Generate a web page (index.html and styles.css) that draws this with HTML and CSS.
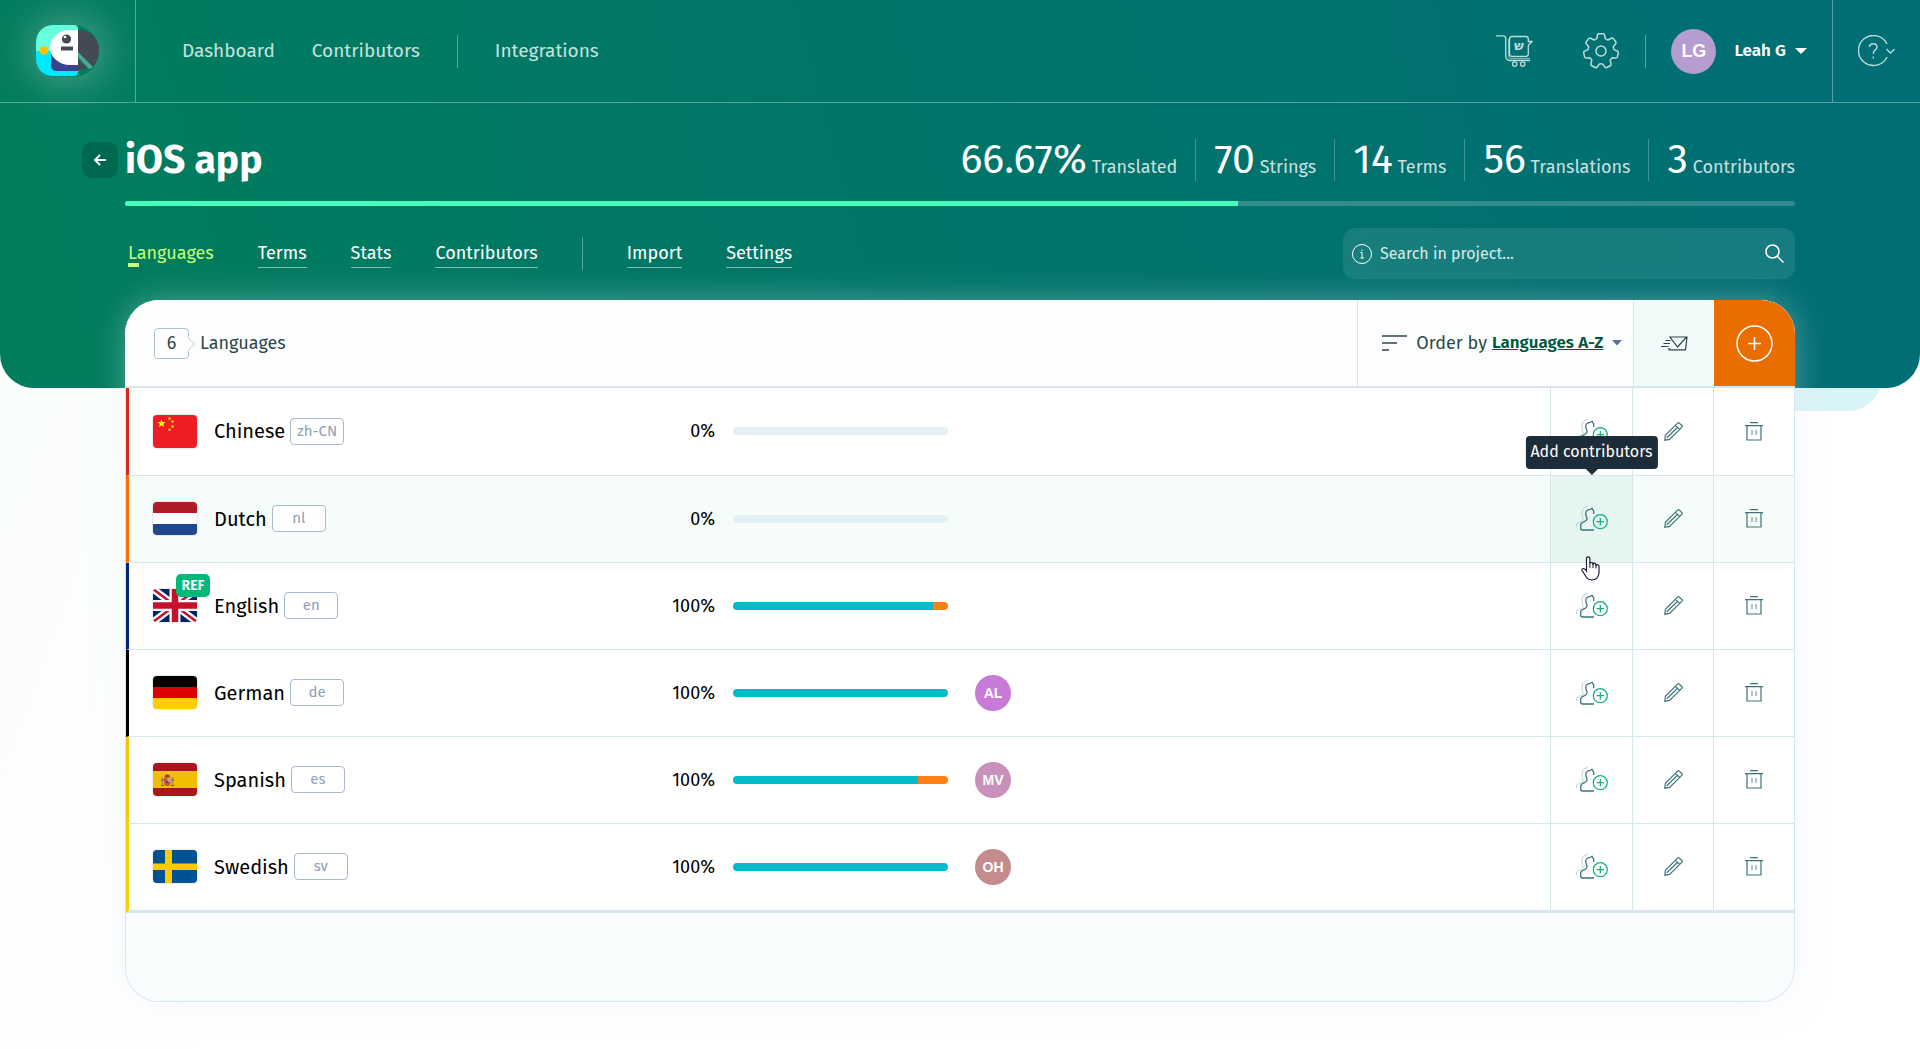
FILE: index.html
```html
<!DOCTYPE html>
<html lang="en">
<head>
  <meta charset="UTF-8">
  <meta name="viewport" content="width=device-width, initial-scale=1.0">
  <title>iOS app - Languages</title>
  <link rel="stylesheet" href="styles.css">
</head>
<body>
  <!-- shared icons -->
  <svg class="sprite" aria-hidden="true">
    <symbol id="icon-add-user" viewBox="0 0 32 25">
      <path d="M.5 21v-2c0-3 6-2.500 6.500-5 .3-2-1.500-4.500-1-8C6.500 2.500 8.500.8 12 .6" fill="none" stroke="#b9d0d0"/>
      <path d="M17.700 8V5l-1.700-2.600c-1.200 1.400-3.200.9-4.600 1.800C8.600 6 9.800 9.500 11 12c1 4-5.500 3.500-6.300 6.500V22c0 1.300.6 2 1.800 2H18" fill="none" stroke="#3c7478" stroke-width="1.300"/>
      <circle cx="24.300" cy="15.700" r="7" fill="none" stroke="#0fb07a" stroke-width="1.200"/>
      <path d="M24.300 12v7.400M20.600 15.700H28" stroke="#0fb07a" stroke-width="1.200"/>
    </symbol>
    <symbol id="icon-pencil" viewBox="0 0 19 19">
      <path d="M.8 18.200l.6-5L13.800.9q.7-.5 1.300 0l2.900 2.800q.6.700 0 1.400L5.600 17.400zM11.500 3.300l4.100 4.100M13.300 5.500L2.800 15.800" fill="none" stroke="#3c7478" stroke-width="1.200"/>
    </symbol>
    <symbol id="icon-trash" viewBox="0 0 18 19">
      <path d="M5 .7h8M0 3.700h18M2 4v14h14V4" fill="none" stroke="#3c7478" stroke-width="1.200"/>
      <path d="M7 8v5M11 8v5" stroke="#7fa5a7" stroke-width="1.300"/>
    </symbol>
  </svg>

  <header class="hero">
    <div class="topbar">
      <a class="logo" href="#" aria-label="Home">
        <svg width="63" height="52" viewBox="0 0 63 52" aria-hidden="true">
          <path d="M0 26V18C0 7 7 0 18 0H38Q42 0 42 4V26z" fill="#66ffdb"/>
          <path d="M0 26V33C0 44 7 51 18 51H38Q42 51 42 47V26z" fill="#00eaff"/>
          <path d="M15 26H42V46H21Q15 46 15 40z" fill="#3b4390"/>
          <path d="M42 5H34A20 17.500 0 0 0 34 40H42z" fill="#fff"/>
          <path d="M42 5C54 5 63 14 63 25C63 32 60 38 57 42L42 27z" fill="#434955"/>
          <path d="M42 34L51 43Q47 45 42 45z" fill="#434955"/>
          <path d="M42 27L57 42L53 44L42 32z" fill="#6db9a5" opacity=".7"/>
          <circle cx="30.500" cy="14" r="4.600" fill="#434955"/>
          <circle cx="29" cy="12" r="1.300" fill="#fff"/>
          <path d="M25 21.500H37V25.500H25z" fill="#434955"/>
          <circle cx="8" cy="25.500" r="4.300" fill="#ffc400"/>
        </svg>
      </a>
      <nav class="main-nav">
        <a href="#">Dashboard</a>
        <a href="#">Contributors</a>
        <span class="divider"></span>
        <a href="#">Integrations</a>
      </nav>
      <div class="tools">
        <button class="icon-btn" aria-label="Order translations">
          <svg width="37" height="33" viewBox="0 0 37 33" fill="none" stroke="currentColor" stroke-width="1.300" aria-hidden="true">
            <path d="M0 .8H7Q9.700.8 9.700 3.500V20Q9.700 25.500 14 25.500H34"/>
            <path d="M32.300 10.500V19Q32.300 21.300 30 21.300H16Q13.500 21.300 13.500 19V4Q13.500 1.500 16 1.500H30Q32.300 1.500 32.300 4V6.500H36L32.300 10.500"/>
            <path d="M12.500 4V20Q12.500 23.500 15.500 23.500H34" opacity=".6"/>
            <circle cx="18.700" cy="29" r="2.200"/>
            <circle cx="26.700" cy="29" r="2.200"/>
            <text class="cart-letter" x="23" y="15" text-anchor="middle">ש</text>
          </svg>
        </button>
        <button class="icon-btn" aria-label="Settings">
          <svg width="36" height="36" viewBox="-18 -18 36 36" aria-hidden="true">
            <g id="tooth">
              <path d="M-5.550-11.530L-4.200-12.500L-3.500-16Q-3.200-17.300-2-17.300H2Q3.200-17.300 3.500-16L4.200-12.500L5.550-11.530" fill="none" stroke="currentColor" stroke-width="1.500"/>
            </g>
            <use href="#tooth" transform="rotate(51.430)"/>
            <use href="#tooth" transform="rotate(102.860)"/>
            <use href="#tooth" transform="rotate(154.290)"/>
            <use href="#tooth" transform="rotate(205.710)"/>
            <use href="#tooth" transform="rotate(257.140)"/>
            <use href="#tooth" transform="rotate(308.570)"/>
            <circle r="5" fill="none" stroke="currentColor" stroke-width="1.500"/>
          </svg>
        </button>
        <span class="divider"></span>
        <button class="user">
          <span class="avatar avatar-large">LG</span>
          <span>Leah G</span>
          <svg width="12" height="6" viewBox="0 0 12 6" aria-hidden="true"><path d="M0 0H12L6 6z" fill="#fff"/></svg>
        </button>
      </div>
      <button class="help" aria-label="Help">
        <svg width="38" height="32" viewBox="0 0 38 32" fill="none" stroke="currentColor" stroke-width="1.400" aria-hidden="true">
          <path d="M29 9A15 15 0 1 0 29 22"/>
          <path d="M11.500 12Q11.500 8.800 15.300 8.800Q19 8.800 19 12Q19 14 17 15.200Q15.300 16.300 15.300 19M15.300 21.500V23.500"/>
          <path d="M28.500 14L32.500 18L36.500 14"/>
        </svg>
      </button>
    </div>

    <div class="wrap">
      <div class="project-head">
        <a class="back" href="#" aria-label="Back">
          <svg width="14" height="12" viewBox="0 0 14 12" fill="none" stroke="#fff" stroke-width="2" aria-hidden="true"><path d="M13 6H2M7 1L2 6L7 11"/></svg>
        </a>
        <h1>iOS app</h1>
        <ul class="stats">
          <li><strong>66.67%</strong> Translated</li>
          <li><strong>70</strong> Strings</li>
          <li><strong>14</strong> Terms</li>
          <li><strong>56</strong> Translations</li>
          <li><strong>3</strong> Contributors</li>
        </ul>
      </div>
      <div class="total"><div class="total-fill" style="width: 66.67%"></div></div>
      <div class="project-nav">
        <nav class="tabs">
          <a class="active" href="#">Languages</a>
          <a href="#">Terms</a>
          <a href="#">Stats</a>
          <a href="#">Contributors</a>
          <span class="divider"></span>
          <a href="#">Import</a>
          <a href="#">Settings</a>
        </nav>
        <form class="search">
          <svg width="20" height="20" viewBox="0 0 20 20" fill="none" stroke="#fff" aria-hidden="true">
            <circle cx="10" cy="10" r="9.500"/>
            <path d="M8.500 8.500H10V14M8.500 14H12M10 5.500V7"/>
          </svg>
          <input type="text" placeholder="Search in project..." aria-label="Search in project">
          <button aria-label="Search">
            <svg width="19" height="19" viewBox="0 0 19 19" fill="none" stroke="#fff" stroke-width="1.500" aria-hidden="true"><circle cx="7.500" cy="7.500" r="6.500"/><path d="M12 12L18.500 18.500"/></svg>
          </button>
        </form>
      </div>
    </div>
  </header>

  <main class="wrap">
    <section class="card">
      <div class="card-head">
        <h2><span class="count">6</span> Languages</h2>
        <div class="order">
          <svg width="25" height="16" viewBox="0 0 25 16" stroke="#2c474c" stroke-width="1.300" aria-hidden="true"><path d="M0 1H25M0 8H15M0 15H7"/></svg>
          <label for="order">Order by</label>
          <select id="order">
            <option>Languages A-Z</option>
            <option>Languages Z-A</option>
            <option>Progress</option>
          </select>
          <svg width="10" height="6" viewBox="0 0 10 6" aria-hidden="true"><path d="M0 0H10L5 5.500z" fill="#55769b"/></svg>
        </div>
        <button class="mail" aria-label="Notify contributors">
          <svg width="27" height="15" viewBox="0 0 27 15" fill="none" stroke="#2c474c" stroke-width="1.200" aria-hidden="true">
            <path d="M8 12V13.800H24.500L26 1H9L16.500 11L25.500 1"/>
            <path d="M4.500 4.500H9.500M2.500 7.500H9M0 10.500H7.500"/>
          </svg>
        </button>
        <button class="add" aria-label="Add language">
          <svg width="37" height="37" viewBox="0 0 37 37" fill="none" stroke="#fff" stroke-width="1.500" aria-hidden="true"><circle cx="18.500" cy="18.500" r="17.500"/><path d="M18.500 12V25M12 18.500H25"/></svg>
        </button>
      </div>

      <table class="languages">
        <tbody>
          <tr>
            <th class="name china" scope="row">
              <div class="lang">
                <svg class="flag" viewBox="0 0 44 33" aria-hidden="true">
                  <path d="M0 0H44V33H0z" fill="#ee1c25"/>
                  <path d="M8.500 4L9.500 7H12.700L10.200 9L11.100 12L8.500 10.200L5.900 12L6.800 9L4.300 7H7.500z" fill="#ff0"/>
                  <g fill="#ffe600"><circle cx="16.500" cy="3.500" r="1.200"/><circle cx="19.500" cy="6.500" r="1.200"/><circle cx="19.500" cy="11.500" r="1.200"/><circle cx="16.500" cy="14.800" r="1.200"/></g>
                </svg>
                <span>Chinese</span><span class="code">zh-CN</span>
              </div>
            </th>
            <td class="percent">0%</td>
            <td class="progress"><div class="bar"></div></td>
            <td class="people"></td>
            <td class="action assign"><button aria-label="Add contributors"><svg width="32" height="25"><use href="#icon-add-user"/></svg></button></td>
            <td class="action"><button aria-label="Edit"><svg width="19" height="19"><use href="#icon-pencil"/></svg></button></td>
            <td class="action"><button aria-label="Delete"><svg width="18" height="19"><use href="#icon-trash"/></svg></button></td>
          </tr>
          <tr class="hovered">
            <th class="name netherlands" scope="row">
              <div class="lang">
                <svg class="flag" viewBox="0 0 44 33" aria-hidden="true">
                  <path d="M0 0H44V33H0z" fill="#fff"/>
                  <path d="M0 0H44V11H0z" fill="#ae1c28"/>
                  <path d="M0 22H44V33H0z" fill="#21468b"/>
                </svg>
                <span>Dutch</span><span class="code">nl</span>
              </div>
            </th>
            <td class="percent">0%</td>
            <td class="progress"><div class="bar"></div></td>
            <td class="people"></td>
            <td class="action assign current">
              <button aria-label="Add contributors"><svg width="32" height="25"><use href="#icon-add-user"/></svg></button>
              <span class="tooltip" role="tooltip">Add contributors</span>
              <svg class="pointer" width="19" height="25" viewBox="0 0 19 25" aria-hidden="true">
                <path d="M5.500 14V2.500Q5.500.8 7.200.8T8.900 2.500V7Q11.500 5.800 12 7.500V9Q12.200 6.500 14.500 7.500L15 10Q15.500 8 17 8.800Q18 9.200 18 10.500V17Q17 24 11 24Q7 24 5 20.500L1 14.500Q.5 12.500 2.500 12.500Q4 12.700 5.500 15z" fill="#fff" stroke="#1c1c33" stroke-width="1.200"/>
                <path d="M8.900 6V12M12 7.500V12M15 9V12.500" fill="none" stroke="#1c1c33"/>
              </svg>
            </td>
            <td class="action"><button aria-label="Edit"><svg width="19" height="19"><use href="#icon-pencil"/></svg></button></td>
            <td class="action"><button aria-label="Delete"><svg width="18" height="19"><use href="#icon-trash"/></svg></button></td>
          </tr>
          <tr>
            <th class="name britain" scope="row">
              <div class="lang">
                <span class="flag-holder">
                  <svg class="flag" viewBox="0 0 44 33" aria-hidden="true">
                    <path d="M0 0H44V33H0z" fill="#012169"/>
                    <path d="M0 0L44 33M44 0L0 33" stroke="#fff" stroke-width="7"/>
                    <path d="M0 0L44 33M44 0L0 33" stroke="#c8102e" stroke-width="2.500"/>
                    <path d="M22 0V33M0 16.500H44" stroke="#fff" stroke-width="11"/>
                    <path d="M22 0V33M0 16.500H44" stroke="#c8102e" stroke-width="6.500"/>
                  </svg>
                  <span class="ref">REF</span>
                </span>
                <span>English</span><span class="code">en</span>
              </div>
            </th>
            <td class="percent">100%</td>
            <td class="progress"><div class="bar"><div class="done" style="width: 93%"></div><div class="fuzzy" style="width: 7%"></div></div></td>
            <td class="people"></td>
            <td class="action assign"><button aria-label="Add contributors"><svg width="32" height="25"><use href="#icon-add-user"/></svg></button></td>
            <td class="action"><button aria-label="Edit"><svg width="19" height="19"><use href="#icon-pencil"/></svg></button></td>
            <td class="action"><button aria-label="Delete"><svg width="18" height="19"><use href="#icon-trash"/></svg></button></td>
          </tr>
          <tr>
            <th class="name germany" scope="row">
              <div class="lang">
                <svg class="flag" viewBox="0 0 44 33" aria-hidden="true">
                  <path d="M0 0H44V11H0z"/>
                  <path d="M0 11H44V22H0z" fill="#d00"/>
                  <path d="M0 22H44V33H0z" fill="#ffce00"/>
                </svg>
                <span>German</span><span class="code">de</span>
              </div>
            </th>
            <td class="percent">100%</td>
            <td class="progress"><div class="bar"><div class="done" style="width: 100%"></div></div></td>
            <td class="people"><span class="avatar avatar-al">AL</span></td>
            <td class="action assign"><button aria-label="Add contributors"><svg width="32" height="25"><use href="#icon-add-user"/></svg></button></td>
            <td class="action"><button aria-label="Edit"><svg width="19" height="19"><use href="#icon-pencil"/></svg></button></td>
            <td class="action"><button aria-label="Delete"><svg width="18" height="19"><use href="#icon-trash"/></svg></button></td>
          </tr>
          <tr>
            <th class="name spain" scope="row">
              <div class="lang">
                <svg class="flag" viewBox="0 0 44 33" aria-hidden="true">
                  <path d="M0 0H44V33H0z" fill="#aa151b"/>
                  <path d="M0 8H44V25H0z" fill="#f1bf00"/>
                  <path d="M9 14V22M19.500 14V22" stroke="#a88a62" stroke-width="1.500"/>
                  <path d="M8 22.500H11M18 22.500H21M8 17H11M18 17H21" stroke="#7d5a38"/>
                  <path d="M11 15H17.500V20Q17.500 23 14.300 23Q11 23 11 20z" fill="#c0543f"/>
                  <path d="M14.300 15H17.500V19H14.300z" fill="#cfa3a8"/>
                  <path d="M11.500 14.500Q11.500 11.500 14.300 11.500T17 14.500z" fill="#9c3a24"/>
                  <circle cx="14.300" cy="19" r="1.200" fill="#5a3d72"/>
                </svg>
                <span>Spanish</span><span class="code">es</span>
              </div>
            </th>
            <td class="percent">100%</td>
            <td class="progress"><div class="bar"><div class="done" style="width: 86%"></div><div class="fuzzy" style="width: 14%"></div></div></td>
            <td class="people"><span class="avatar avatar-mv">MV</span></td>
            <td class="action assign"><button aria-label="Add contributors"><svg width="32" height="25"><use href="#icon-add-user"/></svg></button></td>
            <td class="action"><button aria-label="Edit"><svg width="19" height="19"><use href="#icon-pencil"/></svg></button></td>
            <td class="action"><button aria-label="Delete"><svg width="18" height="19"><use href="#icon-trash"/></svg></button></td>
          </tr>
          <tr>
            <th class="name sweden" scope="row">
              <div class="lang">
                <svg class="flag" viewBox="0 0 44 33" aria-hidden="true">
                  <path d="M0 0H44V33H0z" fill="#005293"/>
                  <path d="M12 0H19V33H12zM0 13.500H44V20H0z" fill="#fecb00"/>
                </svg>
                <span>Swedish</span><span class="code">sv</span>
              </div>
            </th>
            <td class="percent">100%</td>
            <td class="progress"><div class="bar"><div class="done" style="width: 100%"></div></div></td>
            <td class="people"><span class="avatar avatar-oh">OH</span></td>
            <td class="action assign"><button aria-label="Add contributors"><svg width="32" height="25"><use href="#icon-add-user"/></svg></button></td>
            <td class="action"><button aria-label="Edit"><svg width="19" height="19"><use href="#icon-pencil"/></svg></button></td>
            <td class="action"><button aria-label="Delete"><svg width="18" height="19"><use href="#icon-trash"/></svg></button></td>
          </tr>
        </tbody>
      </table>
      <div class="card-foot"></div>
    </section>
  </main>
</body>
</html>
```
FILE: styles.css
```css
* {
  box-sizing: border-box;
}
body {
  margin: 0;
  font-family: "Fira Sans", "Noto Sans", sans-serif;
  font-size: 18px;
  line-height: 24px;
  color: #000;
  background: linear-gradient(110deg, #f8fdfb, #fff 25%);
  min-height: 100vh;
}
a {
  color: inherit;
  text-decoration: none;
}
button, input, select {
  font: inherit;
  color: inherit;
  background: none;
  border: none;
  padding: 0;
}
button {
  cursor: pointer;
  display: flex;
  align-items: center;
  justify-content: center;
}
svg {
  display: block;
  flex: none;
}
.sprite {
  position: absolute;
  width: 0;
  height: 0;
}
.wrap {
  padding: 0 125px;
}
.divider {
  width: 1px;
  height: 33px;
  background: rgba(255,255,255,0.35);
}
.avatar {
  display: flex;
  align-items: center;
  justify-content: center;
  width: 36px;
  height: 36px;
  border-radius: 50%;
  color: white;
  font-family: "Liberation Sans", sans-serif;
  font-size: 14px;
  font-weight: bold;
}

/* green area */
.hero {
  position: relative;
  color: white;
  background: linear-gradient(75deg, #007d5c, #006e75 95%);
  border-radius: 0 0 34px 34px;
  padding-bottom: 109px;
}
.hero::before {
  content: "";
  position: absolute;
  z-index: -1;
  left: 50%;
  right: 38px;
  bottom: -23px;
  height: 80px;
  background: #d9f4f7;
  border-radius: 0 0 34px 0;
}
.topbar {
  display: flex;
  height: 103px;
  border-bottom: 1px solid rgba(255,255,255,0.35);
}
.logo {
  display: flex;
  align-items: center;
  justify-content: center;
  width: 136px;
  border-right: 1px solid rgba(255,255,255,0.35);
}
.logo svg {
  overflow: visible;
  border-radius: 26px;
  box-shadow: 0 0 45px 4px rgba(255,255,255,0.35);
}
.main-nav {
  display: flex;
  align-items: center;
  gap: 37px;
  padding-left: 46px;
  font-size: 19px;
  color: rgba(255,255,255,0.8);
}
.tools {
  display: flex;
  align-items: center;
  margin-left: auto;
  color: rgba(255,255,255,0.75);
}
.icon-btn {
  margin-right: 50px;
}
.icon-btn + .divider {
  margin-left: -24px;
  margin-right: 25px;
}
.cart-letter {
  font: bold 13px "DejaVu Sans", sans-serif;
  fill: currentColor;
  stroke: none;
}
.user {
  gap: 18px;
  margin-right: 25px;
  color: white;
  font-size: 17px;
  font-weight: 600;
}
.user svg {
  margin-left: -9px;
}
.avatar-large {
  width: 45px;
  height: 45px;
  font-size: 18px;
  background: #b59dd1;
}
.help {
  width: 88px;
  border-left: 1px solid rgba(255,255,255,0.35);
  color: rgba(255,255,255,0.75);
}
.project-head {
  display: flex;
  align-items: center;
  height: 42px;
  margin-top: 36px;
}
.back {
  display: flex;
  align-items: center;
  justify-content: center;
  width: 36px;
  height: 36px;
  margin-left: -43px;
  margin-right: 7px;
  border-radius: 10px;
  background: rgba(0,60,50,0.3);
}
h1 {
  margin: 0;
  font-size: 39px;
  line-height: 42px;
  font-weight: 700;
}
.stats {
  display: flex;
  margin: 0 0 0 auto;
  padding: 0;
  list-style: none;
  color: rgba(255,255,255,0.8);
}
.stats li {
  padding: 0 18px;
  border-left: 1px solid rgba(255,255,255,0.25);
}
.stats li:first-child {
  border-left: none;
}
.stats li:last-child {
  padding-right: 0;
}
.stats strong {
  font-size: 41px;
  line-height: 42px;
  font-weight: 400;
  color: white;
}
.total {
  height: 5px;
  margin-top: 20px;
  border-radius: 3px;
  background: rgba(255,255,255,0.2);
  overflow: hidden;
}
.total-fill {
  height: 100%;
  background: #45ffba;
}
.project-nav {
  display: flex;
  justify-content: space-between;
  margin-top: 22px;
}
.tabs {
  display: flex;
  align-items: center;
  gap: 44px;
  padding-left: 3px;
}
.tabs a {
  padding: 1px 0 2px;
  border-bottom: 1px solid rgba(255,255,255,0.5);
}
.tabs .active {
  color: #c6ff72;
  border-bottom-color: transparent;
  background: linear-gradient(#c6ff72, #c6ff72) no-repeat left bottom / 11px 4px;
}
.search {
  display: flex;
  align-items: center;
  gap: 8px;
  width: 452px;
  height: 51px;
  padding: 0 11px 0 9px;
  border-radius: 12px;
  background: rgba(255,255,255,0.09);
}
.search input {
  flex: 1;
  outline: none;
  font-size: 16px;
}
.search input::placeholder {
  color: rgba(255,255,255,0.85);
}

/* languages card */
.card {
  position: relative;
  margin-top: -88px;
  border: 1px solid #d5e7ec;
  border-top: none;
  border-radius: 34px;
  background: white;
  box-shadow: 0 0 32px rgba(228,232,248,0.35);
}
.card-head {
  display: flex;
  height: 88px;
  margin: 0 -1px;
  background: #fcfefd;
  border-bottom: 2px solid #d5e7ec;
  border-radius: 34px 34px 0 0;
  color: #2c474c;
}
h2 {
  display: flex;
  align-items: center;
  gap: 11px;
  margin: 0 auto 0 29px;
  font-size: 18px;
  font-weight: 400;
}
.count {
  position: relative;
  width: 35px;
  line-height: 29px;
  text-align: center;
  border: 1px solid #a9c5d0;
  border-radius: 4px;
  background: white;
}
.count::after {
  content: "";
  position: absolute;
  top: 10px;
  right: -5px;
  width: 8px;
  height: 8px;
  border: 1px solid #c3d8e0;
  border-left-color: transparent;
  border-bottom-color: transparent;
  background: white;
  transform: rotate(45deg);
}
.order {
  display: flex;
  align-items: center;
  gap: 8px;
  padding: 0 11px 0 24px;
  border-left: 1px solid #d5e7ec;
}
.order label {
  margin-left: 1px;
  margin-right: -3px;
}
.order select {
  appearance: none;
  font-size: 17px;
  font-weight: 600;
  color: #00573b;
  text-decoration: underline;
}
.mail {
  width: 81px;
  border-left: 1px solid #d5e7ec;
  background: #f2fbfa;
}
.add {
  width: 81px;
  background: #ea6d00;
  border-radius: 0 34px 0 0;
}
.languages {
  width: 100%;
  table-layout: fixed;
  border-collapse: separate;
  border-spacing: 0;
}
.languages th, .languages td {
  height: 87px;
  padding: 0 0 1px;
  border-bottom: 1px solid #d5e7ec;
  font-weight: 400;
}
.languages tr:first-child th, .languages tr:first-child td {
  height: 88px;
}
.languages tr:last-child th, .languages tr:last-child td {
  height: 89px;
  border-bottom-width: 3px;
}
.hovered {
  background: #f5fcfa;
}
.languages .name {
  width: 31%;
  border-left: 3px solid;
}
.languages .china { border-left-color: #de2910; }
.languages .netherlands { border-left-color: #ff6c00; }
.languages .britain { border-left-color: #00247d; }
.languages .germany { border-left-color: #000; }
.languages .spain { border-left-color: #ffc400; }
.languages .sweden { border-left-color: #fecc00; }
.lang {
  display: flex;
  align-items: center;
  gap: 5px;
  padding-left: 24px;
  font-size: 20px;
}
.flag {
  width: 44px;
  height: 33px;
  border-radius: 4px;
  box-shadow: 0 0 2px rgba(0,0,0,0.25);
}
.lang > :first-child {
  margin-right: 12px;
}
.flag-holder {
  position: relative;
}
.ref {
  position: absolute;
  top: -15px;
  left: 23px;
  width: 34px;
  line-height: 23px;
  text-align: center;
  border-radius: 5px;
  background: #00b979;
  color: white;
  font-size: 14px;
  font-weight: 600;
}
.code {
  min-width: 54px;
  line-height: 25px;
  text-align: center;
  border: 1px solid #a9b9cb;
  border-radius: 4px;
  background: white;
  color: #8ca0b8;
  font-size: 15px;
}
.percent {
  width: 72px;
  text-align: right;
}
.progress {
  width: 252px;
}
.bar {
  display: flex;
  width: 215px;
  height: 8px;
  margin-left: 18px;
  border-radius: 4px;
  background: #e4f1f4;
  overflow: hidden;
}
.done {
  background: #00bcc9;
}
.fuzzy {
  background: #ff7f16;
}
.languages .people {
  padding-left: 8px;
}
.avatar-al { background: #c77bd7; }
.avatar-mv { background: #c990bb; }
.avatar-oh { background: #c48c8c; }
.languages .action {
  position: relative;
  width: 81px;
  border-left: 1px solid #d5e7ec;
}
.languages .assign {
  width: 82px;
}
.action button {
  width: 100%;
  height: 85px;
}
.current {
  background: #e5f6f0;
}
.tooltip {
  position: absolute;
  bottom: 93px;
  left: 50%;
  transform: translateX(-50%);
  padding: 4px 5px 5px;
  border-radius: 4px;
  background: #1c2c38;
  color: white;
  font-size: 16px;
  white-space: nowrap;
}
.tooltip::after {
  content: "";
  position: absolute;
  top: 100%;
  left: 50%;
  margin-left: -6px;
  border: 6px solid transparent;
  border-top-color: #1c2c38;
  border-bottom: none;
}
.pointer {
  position: absolute;
  z-index: 1;
  top: 80px;
  left: 30px;
}
.card-foot {
  height: 88px;
  border-radius: 0 0 33px 33px;
  background: #f8fcfc;
}
```
